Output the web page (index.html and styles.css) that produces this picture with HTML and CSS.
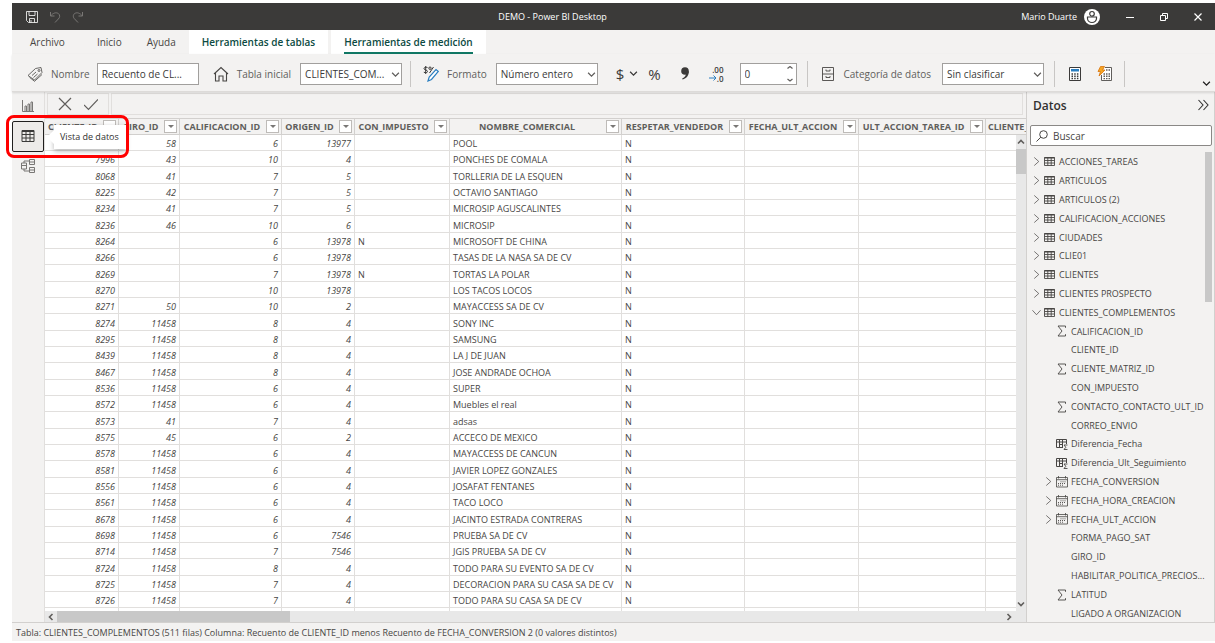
FILE: index.html
```
<!DOCTYPE html>
<html lang="es">
<head>
    <meta charset="UTF-8">
    <meta name="viewport" content="width=device-width, initial-scale=1.0">
    <title>DEMO - Power BI Desktop</title>
    <link rel="stylesheet" href="styles.css">
</head>
<body>
    <!-- shared icons -->
    <svg class="sprite" aria-hidden="true">
        <symbol id="i-down" viewBox="0 0 8 8"><path d="M1 2.5 4 5.5 7 2.5" fill="none" stroke="currentColor" stroke-width="1.1"/></symbol>
        <symbol id="i-right" viewBox="0 0 10 10"><path d="M2.5.5 7.5 5 2.5 9.5" fill="none" stroke="currentColor" stroke-width=".8"/></symbol>
        <symbol id="i-open" viewBox="0 0 10 10"><path d="M.5 2.5 5 7.5 9.5 2.5" fill="none" stroke="currentColor" stroke-width=".8"/></symbol>
        <symbol id="i-table" viewBox="0 0 11 11"><path d="M.5 1.5h10v8H.5zM.5 4.5h10M.5 7h10M3.800 1.500v8M7.200 1.500v8" fill="none" stroke="currentColor" stroke-width=".9"/><path d="M.5 1h10v1.500H.5z" fill="currentColor"/></symbol>
        <symbol id="i-sum" viewBox="0 0 12 12"><path d="M9.5 2.8V1H2l4 5-4 5h7.5V9.2" fill="none" stroke="currentColor" stroke-width=".9"/></symbol>
        <symbol id="i-calc" viewBox="0 0 12 12"><path d="M7 9.5H.5v-8h10V6M.5 4h10M3.5 1.5v8M6.500 1.500v8M3.500 6.500h3.500" fill="none" stroke="currentColor"/><path d="M11.500 7H8l1.800 2.300L8 11.500h3.500" fill="none" stroke="currentColor" stroke-width=".9"/></symbol>
        <symbol id="i-date" viewBox="0 0 12 12"><path d="M.5 1.500h11v9.500H.5zM.5 3.700h11M2.500 0v2.500M9.500 0v2.500" fill="none" stroke="currentColor" stroke-width=".8"/><path d="M4.500 5.800h5.500M2 7.500h8M2 9.200h6" fill="none" stroke="currentColor" stroke-width=".9" stroke-dasharray="1 1"/></symbol>
    </svg>

    <div class="app">
        <header class="titlebar">
            <div class="quick">
                <button aria-label="Guardar"><svg viewBox="0 0 12 12"><path d="M.5.5h11v11h-9l-2-2zM3 .5v4h6v-4M3.500 11.500v-4h5v4M5 11.500V9" fill="none" stroke="currentColor" stroke-width=".8"/></svg></button>
                <button class="dim" aria-label="Deshacer"><svg viewBox="0 0 12 12"><path d="M1.500 1v4h4M1.500 5C4 2 7 1 9.300 2.500c2 1.500 1.700 4 0 5.500L6 11.500" fill="none" stroke="currentColor"/></svg></button>
                <button class="dim" aria-label="Rehacer"><svg viewBox="0 0 12 12"><path d="M10.500 1v4h-4M10.500 5C8 2 5 1 2.700 2.500c-2 1.500-1.700 4 0 5.500L6 11.500" fill="none" stroke="currentColor"/></svg></button>
            </div>
            <div class="title">DEMO - Power BI Desktop</div>
            <div class="session">
                <span>Mario Duarte</span>
                <svg class="avatar" viewBox="0 0 16 16"><circle cx="8" cy="8" r="8" fill="#fff"/><circle cx="8" cy="4.800" r="2.300" fill="none" stroke="#3b3a39" stroke-width="1.200"/><path d="M3.500 8h9v1.500a4.500 4 0 0 1-9 0z" fill="none" stroke="#3b3a39" stroke-width="1.200"/></svg>
                <button aria-label="Minimizar"><svg viewBox="0 0 10 10"><path d="M1 5.500h8" stroke="currentColor"/></svg></button>
                <button aria-label="Restaurar"><svg viewBox="0 0 10 10"><path d="M1.500 3.500h5v5h-5zM3.500 3.500v-2h5v5h-2" fill="none" stroke="currentColor"/></svg></button>
                <button aria-label="Cerrar"><svg viewBox="0 0 10 10"><path d="m1.500 1.500 7 7M8.500 1.500l-7 7" stroke="currentColor" stroke-width="1.200"/></svg></button>
            </div>
        </header>

        <nav class="tabs">
            <button class="tab file">Archivo</button>
            <button class="tab">Inicio</button>
            <button class="tab">Ayuda</button>
            <button class="tab tool">Herramientas de tablas</button>
            <button class="tab tool active"><span>Herramientas de medición</span></button>
        </nav>

        <div class="ribbon">
            <div class="group">
                <svg class="icon" viewBox="0 0 16 16"><path d="m1 9.500 7.500-7L14 1.500l1 5-7.500 7.500zM2.500 11.300l5 4L15 8.500" fill="none" stroke="currentColor" stroke-width=".8"/><circle cx="12" cy="4.500" r="1" fill="none" stroke="currentColor" stroke-width=".8"/><path d="m5 9.500 4-3.500M6.500 11.500l4-3.500" stroke="currentColor" stroke-width=".8"/></svg>
                <label for="nombre">Nombre</label>
                <input id="nombre" class="field" type="text" value="Recuento de CL...">
            </div>
            <div class="group">
                <svg class="icon" viewBox="0 0 16 16"><path d="M1 8 8 1.500 15 8M2.500 7v8H6v-5h4v5h3.500V7" fill="none" stroke="currentColor" stroke-width="1.100"/></svg>
                <label for="tabla">Tabla inicial</label>
                <span class="drop"><select id="tabla" class="field"><option>CLIENTES_COM...</option></select><svg><use href="#i-down"/></svg></span>
            </div>
            <div class="group split">
                <svg class="icon" viewBox="0 0 16 16"><path d="M4.500 1.500C2.500.8 1 1.500 1 2.600 1 4.500 4.500 3.500 4.500 5.500 4.500 6.700 2.500 7 .8 6.200M2.700 0v8" fill="none" stroke="#3b3a39"/><path d="m6.500 7 4-6" stroke="#3b3a39"/><circle cx="7" cy="2.200" r="1.200" fill="none" stroke="#3b3a39"/><path d="m5 15 1.200-4L13 3.500l2.300 2L8.500 13.500z" fill="#fff" stroke="#2a7ec0" stroke-width="1.200"/></svg>
                <label for="formato">Formato</label>
                <span class="drop"><select id="formato" class="field"><option>Número entero</option></select><svg><use href="#i-down"/></svg></span>
                <div class="formats">
                    <button class="money" aria-label="Moneda">$ <svg><use href="#i-down"/></svg></button>
                    <button aria-label="Porcentaje">%</button>
                    <button class="comma" aria-label="Separador de miles"><svg viewBox="0 0 12 16"><circle cx="6" cy="5" r="3.800" fill="currentColor"/><path d="M9.800 5c.2 4-2 7.500-6.300 8.500l-.3-1C6 11.500 7 9.500 7 7z" fill="currentColor"/></svg></button>
                    <button class="decimals" aria-label="Posiciones decimales"><span>.00</span><span><svg viewBox="0 0 8 6"><path d="M0 3h7M4.500.5 7 3 4.500 5.500" fill="none" stroke="#2a7ec0"/></svg>.0</span></button>
                </div>
                <span class="spin"><input class="field" type="text" value="0" aria-label="Decimales"><svg viewBox="0 0 8 16"><path d="m1.500 2.500 2.500-2 2.500 2M1.500 13l2.500 2 2.500-2" fill="none" stroke="currentColor" stroke-width="1.200"/></svg></span>
            </div>
            <div class="group split category">
                <svg class="icon" viewBox="0 0 16 16"><path d="M2.500 1.500h11v13h-11zM2.500 8h11M6 3.500v1.500h4V3.500M6 10v1.500h4V10" fill="none" stroke="currentColor" stroke-width=".9"/></svg>
                <label for="categoria">Categoría de datos</label>
                <span class="drop"><select id="categoria" class="field"><option>Sin clasificar</option></select><svg><use href="#i-down"/></svg></span>
            </div>
            <div class="group split measures">
                <button aria-label="Nueva medida"><svg class="icon" viewBox="0 0 16 16"><path d="M2.500 1.500h11v13h-11z" fill="#fff" stroke="#3b3a39"/><path d="M4 3h8v2.500H4z" fill="#2a7ec0"/><path d="M4.500 8h8M4.500 10.300h8M4.500 12.600h8" stroke="#3b3a39" stroke-width="1.500" stroke-dasharray="1.500 1.200"/></svg></button>
                <button aria-label="Medida rápida"><svg class="icon" viewBox="0 0 16 16"><path d="M8 1.500h6.500v13h-10V9" fill="#fff" stroke="#605e5c"/><path d="M9 4h4M6.500 8h7M6.500 10.300h7M6.500 12.600h7" stroke="#605e5c" stroke-width="1.400" stroke-dasharray="1.500 1"/><path d="M3.500.5h4L5.500 4h2.500L2 10l1.500-4.500H1z" fill="#f5a623" stroke="#d9730d" stroke-width=".8"/></svg></button>
            </div>
            <button class="collapse" aria-label="Contraer cinta"><svg><use href="#i-down"/></svg></button>
        </div>

        <main class="workspace">
            <nav class="views">
                <button aria-label="Vista de informe"><svg viewBox="0 0 14 14"><path d="M1.500 1v11.500H13M4 12V7h1.500v5M7 12V5h1.500v7M10 12V3h1.500v9" fill="none" stroke="currentColor"/></svg></button>
                <div class="current">
                    <button aria-label="Vista de datos" aria-describedby="tip"><svg viewBox="0 0 14 14"><path d="M1 1.500h12v11H1zM1 5.500h12M1 9h12M5 1.500v11M9 1.500v11" fill="none" stroke="currentColor"/><path d="M1 1h12v2H1z" fill="currentColor"/></svg></button>
                    <span class="tooltip" id="tip" role="tooltip">Vista de datos</span>
                    <span class="marker"></span>
                </div>
                <button aria-label="Vista de modelo"><svg viewBox="0 0 14 14"><path d="M.5 4h5v6h-5zM.5 6.500h5M8.500.5h5v5h-5zM8.500 3h5M8.500 8.500h5v5h-5zM8.500 11h5M3 4V2h5.500M3 10v2h5.500" fill="none" stroke="currentColor"/></svg></button>
            </nav>

            <section class="data">
                <div class="formula">
                    <div class="confirm">
                        <button aria-label="Cancelar"><svg viewBox="0 0 14 14"><path d="m1 1 12 12M13 1 1 13" stroke="currentColor" stroke-width="1.200"/></svg></button>
                        <button aria-label="Aceptar"><svg viewBox="0 0 14 14"><path d="m0 8 4.500 4.500L14 2.500" fill="none" stroke="currentColor" stroke-width="1.200"/></svg></button>
                    </div>
                    <input type="text" aria-label="Fórmula">
                </div>

                <div class="sheet">
                    <table>
                        <colgroup>
                            <col class="c-cliente"><col class="c-giro"><col class="c-calif"><col class="c-origen"><col class="c-imp"><col class="c-nombre"><col class="c-resp"><col class="c-fecha"><col class="c-tarea"><col>
                        </colgroup>
                        <thead>
                            <tr>
                                <th><div>CLIENTE_ID<button aria-label="Filtrar"></button></div></th>
                                <th><div>GIRO_ID<button aria-label="Filtrar"></button></div></th>
                                <th><div>CALIFICACION_ID<button aria-label="Filtrar"></button></div></th>
                                <th><div>ORIGEN_ID<button aria-label="Filtrar"></button></div></th>
                                <th><div>CON_IMPUESTO<button aria-label="Filtrar"></button></div></th>
                                <th><div>NOMBRE_COMERCIAL<button aria-label="Filtrar"></button></div></th>
                                <th><div>RESPETAR_VENDEDOR<button aria-label="Filtrar"></button></div></th>
                                <th><div>FECHA_ULT_ACCION<button aria-label="Filtrar"></button></div></th>
                                <th><div>ULT_ACCION_TAREA_ID<button aria-label="Filtrar"></button></div></th>
                                <th class="cut">CLIENTE_</th>
                            </tr>
                        </thead>
                        <tbody>
                            <tr><td></td><td>58</td><td>6</td><td>13977</td><td></td><td>POOL</td><td>N</td><td></td><td></td><td></td></tr>
                            <tr><td>7996</td><td>43</td><td>10</td><td>4</td><td></td><td>PONCHES DE COMALA</td><td>N</td><td></td><td></td><td></td></tr>
                            <tr><td>8068</td><td>41</td><td>7</td><td>5</td><td></td><td>TORLLERIA DE LA ESQUEN</td><td>N</td><td></td><td></td><td></td></tr>
                            <tr><td>8225</td><td>42</td><td>7</td><td>5</td><td></td><td>OCTAVIO SANTIAGO</td><td>N</td><td></td><td></td><td></td></tr>
                            <tr><td>8234</td><td>41</td><td>7</td><td>5</td><td></td><td>MICROSIP AGUSCALINTES</td><td>N</td><td></td><td></td><td></td></tr>
                            <tr><td>8236</td><td>46</td><td>10</td><td>6</td><td></td><td>MICROSIP</td><td>N</td><td></td><td></td><td></td></tr>
                            <tr><td>8264</td><td></td><td>6</td><td>13978</td><td>N</td><td>MICROSOFT DE CHINA</td><td>N</td><td></td><td></td><td></td></tr>
                            <tr><td>8266</td><td></td><td>6</td><td>13978</td><td></td><td>TASAS DE LA NASA SA DE CV</td><td>N</td><td></td><td></td><td></td></tr>
                            <tr><td>8269</td><td></td><td>7</td><td>13978</td><td>N</td><td>TORTAS LA POLAR</td><td>N</td><td></td><td></td><td></td></tr>
                            <tr><td>8270</td><td></td><td>10</td><td>13978</td><td></td><td>LOS TACOS LOCOS</td><td>N</td><td></td><td></td><td></td></tr>
                            <tr><td>8271</td><td>50</td><td>10</td><td>2</td><td></td><td>MAYACCESS SA DE CV</td><td>N</td><td></td><td></td><td></td></tr>
                            <tr><td>8274</td><td>11458</td><td>8</td><td>4</td><td></td><td>SONY INC</td><td>N</td><td></td><td></td><td></td></tr>
                            <tr><td>8295</td><td>11458</td><td>8</td><td>4</td><td></td><td>SAMSUNG</td><td>N</td><td></td><td></td><td></td></tr>
                            <tr><td>8439</td><td>11458</td><td>8</td><td>4</td><td></td><td>LA J DE JUAN</td><td>N</td><td></td><td></td><td></td></tr>
                            <tr><td>8467</td><td>11458</td><td>8</td><td>4</td><td></td><td>JOSE ANDRADE OCHOA</td><td>N</td><td></td><td></td><td></td></tr>
                            <tr><td>8536</td><td>11458</td><td>6</td><td>4</td><td></td><td>SUPER</td><td>N</td><td></td><td></td><td></td></tr>
                            <tr><td>8572</td><td>11458</td><td>6</td><td>4</td><td></td><td>Muebles el real</td><td>N</td><td></td><td></td><td></td></tr>
                            <tr><td>8573</td><td>41</td><td>7</td><td>4</td><td></td><td>adsas</td><td>N</td><td></td><td></td><td></td></tr>
                            <tr><td>8575</td><td>45</td><td>6</td><td>2</td><td></td><td>ACCECO DE MEXICO</td><td>N</td><td></td><td></td><td></td></tr>
                            <tr><td>8578</td><td>11458</td><td>6</td><td>4</td><td></td><td>MAYACCESS DE CANCUN</td><td>N</td><td></td><td></td><td></td></tr>
                            <tr><td>8581</td><td>11458</td><td>6</td><td>4</td><td></td><td>JAVIER LOPEZ GONZALES</td><td>N</td><td></td><td></td><td></td></tr>
                            <tr><td>8556</td><td>11458</td><td>6</td><td>4</td><td></td><td>JOSAFAT FENTANES</td><td>N</td><td></td><td></td><td></td></tr>
                            <tr><td>8561</td><td>11458</td><td>6</td><td>4</td><td></td><td>TACO LOCO</td><td>N</td><td></td><td></td><td></td></tr>
                            <tr><td>8678</td><td>11458</td><td>6</td><td>4</td><td></td><td>JACINTO ESTRADA CONTRERAS</td><td>N</td><td></td><td></td><td></td></tr>
                            <tr><td>8698</td><td>11458</td><td>6</td><td>7546</td><td></td><td>PRUEBA SA DE CV</td><td>N</td><td></td><td></td><td></td></tr>
                            <tr><td>8714</td><td>11458</td><td>7</td><td>7546</td><td></td><td>JGIS PRUEBA SA DE CV</td><td>N</td><td></td><td></td><td></td></tr>
                            <tr><td>8724</td><td>11458</td><td>8</td><td>4</td><td></td><td>TODO PARA SU EVENTO SA DE CV</td><td>N</td><td></td><td></td><td></td></tr>
                            <tr><td>8725</td><td>11458</td><td>7</td><td>4</td><td></td><td>DECORACION PARA SU CASA SA DE CV</td><td>N</td><td></td><td></td><td></td></tr>
                            <tr><td>8726</td><td>11458</td><td>7</td><td>4</td><td></td><td>TODO PARA SU CASA SA DE CV</td><td>N</td><td></td><td></td><td></td></tr>
                            <tr><td></td><td></td><td></td><td></td><td></td><td></td><td></td><td></td><td></td><td></td></tr>
                        </tbody>
                    </table>
                    <div class="scroll-y">
                        <svg viewBox="0 0 8 8"><path d="m1 5.500 3-3 3 3" fill="none" stroke="currentColor" stroke-width="1.600"/></svg>
                        <span class="thumb"></span>
                        <svg viewBox="0 0 8 8"><path d="m1 2.500 3 3 3-3" fill="none" stroke="currentColor" stroke-width="1.600"/></svg>
                    </div>
                </div>
                <div class="scroll-x">
                    <svg viewBox="0 0 8 8"><path d="m5.500 1-3 3 3 3" fill="none" stroke="currentColor" stroke-width="1.600"/></svg>
                    <span class="thumb"></span>
                    <svg viewBox="0 0 8 8"><path d="m2.500 1 3 3-3 3" fill="none" stroke="currentColor" stroke-width="1.600"/></svg>
                </div>
            </section>

            <aside class="pane">
                <div class="pane-head">
                    <h2>Datos</h2>
                    <button aria-label="Contraer panel"><svg viewBox="0 0 12 12"><path d="m1.500 1 4.500 5-4.500 5M6.500 1 11 6l-4.500 5" fill="none" stroke="currentColor" stroke-width="1.100"/></svg></button>
                </div>
                <div class="search">
                    <svg viewBox="0 0 12 12"><circle cx="7.500" cy="4.500" r="3.800" fill="none" stroke="currentColor"/><path d="M4.800 7.200.5 11.500" stroke="currentColor"/></svg>
                    <input type="search" placeholder="Buscar" aria-label="Buscar">
                </div>
                <div class="fields">
                    <ul>
                        <li><svg><use href="#i-right"/></svg><svg><use href="#i-table"/></svg>ACCIONES_TAREAS</li>
                        <li><svg><use href="#i-right"/></svg><svg><use href="#i-table"/></svg>ARTICULOS</li>
                        <li><svg><use href="#i-right"/></svg><svg><use href="#i-table"/></svg>ARTICULOS (2)</li>
                        <li><svg><use href="#i-right"/></svg><svg><use href="#i-table"/></svg>CALIFICACION_ACCIONES</li>
                        <li><svg><use href="#i-right"/></svg><svg><use href="#i-table"/></svg>CIUDADES</li>
                        <li><svg><use href="#i-right"/></svg><svg><use href="#i-table"/></svg>CLIE01</li>
                        <li><svg><use href="#i-right"/></svg><svg><use href="#i-table"/></svg>CLIENTES</li>
                        <li><svg><use href="#i-right"/></svg><svg><use href="#i-table"/></svg>CLIENTES PROSPECTO</li>
                        <li><svg><use href="#i-open"/></svg><svg><use href="#i-table"/></svg>CLIENTES_COMPLEMENTOS</li>
                        <li class="sub"><svg></svg><svg><use href="#i-sum"/></svg>CALIFICACION_ID</li>
                        <li class="sub"><svg></svg><svg></svg>CLIENTE_ID</li>
                        <li class="sub"><svg></svg><svg><use href="#i-sum"/></svg>CLIENTE_MATRIZ_ID</li>
                        <li class="sub"><svg></svg><svg></svg>CON_IMPUESTO</li>
                        <li class="sub"><svg></svg><svg><use href="#i-sum"/></svg>CONTACTO_CONTACTO_ULT_ID</li>
                        <li class="sub"><svg></svg><svg></svg>CORREO_ENVIO</li>
                        <li class="sub"><svg></svg><svg><use href="#i-calc"/></svg>Diferencia_Fecha</li>
                        <li class="sub"><svg></svg><svg><use href="#i-calc"/></svg>Diferencia_Ult_Seguimiento</li>
                        <li class="sub"><svg><use href="#i-right"/></svg><svg><use href="#i-date"/></svg>FECHA_CONVERSION</li>
                        <li class="sub"><svg><use href="#i-right"/></svg><svg><use href="#i-date"/></svg>FECHA_HORA_CREACION</li>
                        <li class="sub"><svg><use href="#i-right"/></svg><svg><use href="#i-date"/></svg>FECHA_ULT_ACCION</li>
                        <li class="sub"><svg></svg><svg></svg>FORMA_PAGO_SAT</li>
                        <li class="sub"><svg></svg><svg></svg>GIRO_ID</li>
                        <li class="sub"><svg></svg><svg></svg>HABILITAR_POLITICA_PRECIOS...</li>
                        <li class="sub"><svg></svg><svg><use href="#i-sum"/></svg>LATITUD</li>
                        <li class="sub"><svg></svg><svg></svg>LIGADO A ORGANIZACION</li>
                    </ul>
                    <span class="thumb"></span>
                </div>
            </aside>
        </main>

        <footer class="status">Tabla: CLIENTES_COMPLEMENTOS (511 filas) Columna: Recuento de CLIENTE_ID menos Recuento de FECHA_CONVERSION 2 (0 valores distintos)</footer>
    </div>
</body>
</html>
```
FILE: styles.css
```
* {
    box-sizing: border-box;
}

body {
    margin: 0;
    padding: 3px 0 2px 12px;
    height: 100vh;
    overflow: hidden;
    background: #fff;
    color: #484644;
    font-family: "Open Sans", "Noto Sans", sans-serif;
    font-size: 9px;
}

button {
    display: flex;
    align-items: center;
    justify-content: center;
    padding: 0;
    border: none;
    background: none;
    color: inherit;
    font: inherit;
    cursor: pointer;
}

svg {
    flex: none;
}

.sprite {
    position: absolute;
    width: 0;
    height: 0;
}

.app {
    display: flex;
    flex-direction: column;
    height: 100%;
    background: #f3f2f1;
}

/* title bar */
.titlebar {
    display: flex;
    align-items: center;
    justify-content: space-between;
    height: 27px;
    padding: 0 12px 0 14px;
    background: #3b3a39;
    color: #fff;
}

.quick,
.session {
    display: flex;
    align-items: center;
}

.quick {
    gap: 11px;
}

.quick svg {
    width: 12px;
    height: 12px;
}

.dim {
    color: #797775;
}

.session span {
    margin-right: 7px;
}

.avatar {
    width: 16px;
    height: 16px;
    margin-right: 25px;
}

.session button {
    margin-left: 24px;
}

.session .avatar + button {
    margin-left: 0;
}

.session button svg {
    width: 10px;
    height: 10px;
}

/* tabs */
.tabs {
    display: flex;
    gap: 1px;
    height: 24px;
    padding-left: 6px;
    font-size: 10px;
}

.tab {
    padding: 0 12px;
}

.file {
    margin-right: 7px;
}

.tool {
    margin-right: 2px;
    padding: 0 13px;
    background: #fff;
    color: #0b4a42;
    font-weight: 600;
}

.active span {
    line-height: 20px;
    padding-top: 2px;
    border-bottom: 2px solid #117865;
}

/* ribbon */
.ribbon {
    position: relative;
    display: flex;
    align-items: center;
    height: 38px;
    padding: 2px 12px 0 15px;
    border-bottom: 1px solid #dddbd9;
    box-shadow: 0 1px 2px rgba(0, 0, 0, 0.12);
    font-size: 10px;
    color: #605e5c;
}

.group {
    display: flex;
    align-items: center;
    margin-right: 14px;
}

.icon {
    width: 16px;
    height: 16px;
    color: #484644;
}

.group label {
    margin: 0 7px 0 8px;
}

.field {
    width: 102px;
    height: 22px;
    padding: 0 4px;
    border: 1px solid #a19f9d;
    border-radius: 0;
    background: #fff;
    color: #3b3a39;
    font: inherit;
    appearance: none;
}

.drop,
.spin {
    position: relative;
}

.drop {
    margin-left: 2px;
}

.drop .field {
    display: block;
}

.drop svg {
    position: absolute;
    right: 2px;
    top: 7px;
    width: 9px;
    height: 9px;
    pointer-events: none;
}

.split {
    position: relative;
    margin-right: 9px;
    margin-left: -6px;
    padding-left: 12px;
    border-left: 1px solid #c8c6c4;
    height: 26px;
}

.group.split + .split {
    margin-left: 1px;
}

.category label {
    margin-right: 9px;
}

.formats {
    display: flex;
    align-items: center;
    gap: 18px;
    margin: 0 16px 0 18px;
    color: #3b3a39;
    font-size: 15px;
}

.money {
    gap: 5px;
}

.formats .money svg {
    width: 9px;
    height: 9px;
}

.money + button {
    margin-left: -8px;
}

.comma svg {
    width: 12px;
    height: 16px;
}

.decimals {
    flex-direction: column;
    align-items: flex-end;
    font-size: 8px;
    line-height: 9px;
    font-weight: 600;
}

.decimals span {
    display: flex;
    align-items: center;
    height: 9px;
}

.decimals svg {
    width: 8px;
    height: 6px;
}

.spin .field {
    display: block;
    width: 57px;
}

.spin svg {
    position: absolute;
    right: 3px;
    top: 3px;
    width: 8px;
    height: 16px;
}

.measures {
    gap: 14px;
    padding-right: 11px;
    border-right: 1px solid #c8c6c4;
}

.collapse {
    align-self: flex-end;
    margin-left: auto;
    margin-right: -8px;
}

.collapse svg {
    width: 9px;
    height: 9px;
    margin-bottom: 3px;
    color: #201f1e;
}

/* workspace */
.workspace {
    display: flex;
    flex: 1;
    min-height: 0;
}

.views {
    width: 33px;
    border-right: 1px solid #e1dfdd;
    color: #797775;
}

.views button {
    width: 32px;
    height: 29px;
    padding-bottom: 2px;
}

.views svg {
    width: 14px;
    height: 14px;
}

.current {
    position: relative;
    z-index: 2;
}

.views .current button {
    height: 31px;
    border: 1px solid #201f1e;
    border-radius: 2px;
    background: #edebe9;
    color: #3b3a39;
}

.tooltip {
    position: absolute;
    left: 42px;
    top: 4px;
    padding: 0 7px 0 6px;
    line-height: 24px;
    background: #fff;
    color: #323130;
    white-space: nowrap;
    box-shadow: 0 2px 5px rgba(0, 0, 0, 0.3);
}

.tooltip::before {
    content: "";
    position: absolute;
    left: -7px;
    top: 4px;
    border: 8px solid transparent;
    border-left: none;
    border-right-color: #fff;
}

.marker {
    position: absolute;
    left: -6px;
    top: -6px;
    width: 123px;
    height: 43px;
    border: 3px solid #f00;
    border-radius: 8px;
}

.data {
    display: flex;
    flex-direction: column;
    flex: 1;
    min-width: 0;
    min-height: 0;
}

.formula {
    display: flex;
    gap: 2px;
    padding: 1px 3px 3px 2px;
}

.confirm {
    display: flex;
    align-items: center;
    gap: 12px;
    padding: 0 10px;
    border: 1px solid #e1dfdd;
    color: #605e5c;
}

.confirm svg {
    width: 14px;
    height: 14px;
}

.formula input {
    flex: 1;
    height: 22px;
    border: 1px solid #e1dfdd;
    background: #f3f2f1;
}

/* scrollbar shares the last cell with the table and sits above it */
.sheet {
    display: grid;
    grid-template: 17px minmax(0, 1fr) / minmax(0, 1fr) 10px;
    flex: 1;
    min-height: 0;
    overflow: hidden;
}

table {
    grid-area: 1 / 1 / 3 / 3;
    align-self: start;
    width: 100%;
    table-layout: fixed;
    border-collapse: separate;
    border-spacing: 0;
    background: #fff;
}

.c-cliente { width: 74px; }
.c-giro { width: 61px; }
.c-calif { width: 102px; }
.c-origen { width: 73px; }
.c-imp { width: 95px; }
.c-nombre { width: 172px; }
.c-resp { width: 123px; }
.c-fecha { width: 114px; }
.c-tarea { width: 127px; }

th {
    height: 17px;
    padding: 0 2px;
    border: solid #d2d0ce;
    border-width: 1px 1px 1px 0;
    background: #f3f2f1;
    color: #605e5c;
    font-weight: 700;
    line-height: 12px;
    white-space: nowrap;
    overflow: hidden;
}

th:last-child,
td:last-child {
    border-right: none;
}

th div {
    display: grid;
    grid-template-columns: 1fr 13px;
    gap: 4px;
    align-items: center;
    justify-items: center;
}

th button {
    width: 13px;
    height: 13px;
    border: 1px solid #bebbb8;
    background: #fff;
}

th button::before {
    content: "";
    border: 3px solid transparent;
    border-top-color: #797775;
    border-bottom: none;
}

.cut {
    text-align: left;
}

td {
    height: 16px;
    padding: 3px 3px 0;
    border-right: 1px solid #e1dfdd;
    border-bottom: 1px solid #e1dfdd;
    line-height: 12px;
    white-space: nowrap;
    overflow: hidden;
}

tr:nth-child(3n) td {
    height: 17px;
}

td:nth-child(-n+4) {
    text-align: right;
    font-style: italic;
}

.scroll-y {
    grid-area: 2 / 2;
    display: flex;
    flex-direction: column;
    align-items: center;
    background: #e8e8e8;
    z-index: 1;
}

.scroll-x {
    display: flex;
    align-items: center;
    height: 11px;
    padding-right: 11px;
    background: #e8e8e8;
}

.scroll-y svg,
.scroll-x svg {
    width: 8px;
    height: 8px;
    margin: 3px 1px;
    color: #605e5c;
}

.scroll-x svg {
    margin: 0 2px;
}

.thumb {
    background: #c8c8c8;
}

.scroll-y .thumb {
    width: 100%;
    height: 25px;
    margin-bottom: auto;
}

.scroll-x .thumb {
    width: 24%;
    height: 100%;
    margin-right: auto;
}

/* data pane */
.pane {
    display: flex;
    flex-direction: column;
    width: 189px;
    border-left: 1px solid #d2d0ce;
    border-right: 1px solid #d2d0ce;
}

.pane-head {
    display: flex;
    align-items: center;
    justify-content: space-between;
    height: 33px;
    padding: 0 5px 7px 6px;
    color: #323130;
}

.pane-head h2 {
    margin: 0;
    font-size: 12px;
    font-weight: 600;
}

.pane-head svg {
    width: 12px;
    height: 12px;
}

.search {
    display: flex;
    align-items: center;
    gap: 5px;
    height: 21px;
    margin: 0 2px 6px 3px;
    padding: 0 5px;
    border: 1px solid #8a8886;
    border-radius: 2px;
    background: #fff;
}

.search svg {
    width: 12px;
    height: 12px;
}

.search input {
    flex: 1;
    min-width: 0;
    padding: 0;
    border: none;
    outline: none;
    background: none;
    font: inherit;
    font-size: 10px;
}

.search input::placeholder {
    color: #484644;
}

.fields {
    display: flex;
    flex: 1;
    min-height: 0;
    overflow: hidden;
}

.fields ul {
    flex: 1;
    width: 0;
    margin: 0;
    padding: 0 0 0 5px;
    list-style: none;
}

.fields li {
    display: flex;
    align-items: center;
    height: 19px;
    white-space: nowrap;
}

.fields li:nth-child(5n) {
    height: 18px;
}

.fields li.sub {
    padding-left: 12px;
}

.fields li svg:first-child {
    width: 9px;
    height: 9px;
    margin-right: 3px;
}

.fields li svg:nth-child(2) {
    width: 11px;
    height: 11px;
    margin-right: 4px;
}

.fields li.sub svg:nth-child(2) {
    width: 12px;
    height: 12px;
    margin-right: 3px;
}

.fields .thumb {
    width: 7px;
    height: 32%;
    margin-right: 2px;
}

.status {
    height: 19px;
    padding-left: 4px;
    border-top: 1px solid #d2d0ce;
    line-height: 19px;
    white-space: nowrap;
}
```
